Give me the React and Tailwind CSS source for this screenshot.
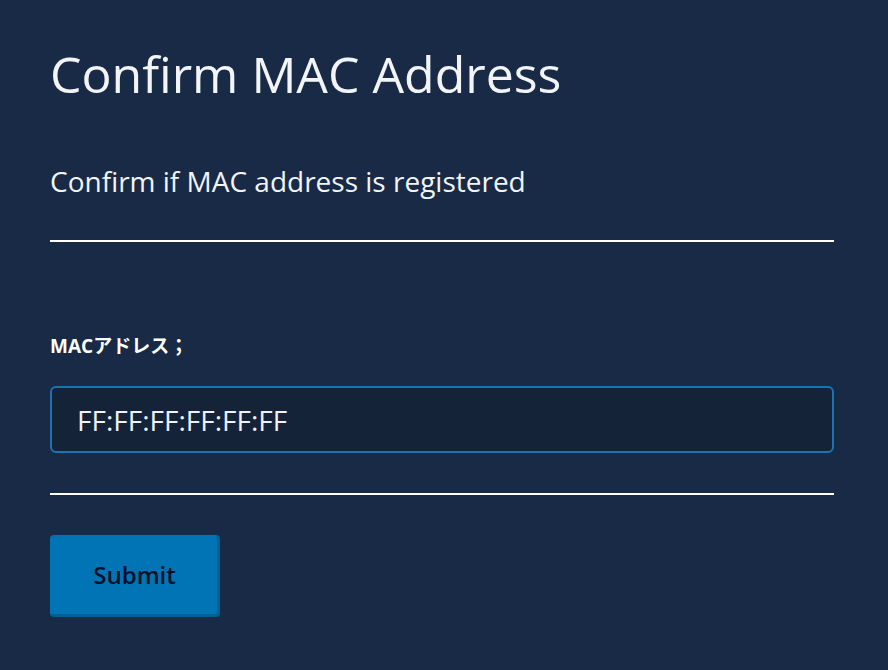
export default function App() {
  return (
    <div className="min-h-screen bg-[#182a45] text-white" style={{ fontFamily: '"Open Sans", "Noto Sans CJK JP", sans-serif' }}>
      <div className="pl-[50px] pr-[54px] pt-[44px]">
        <h1 className="text-[50px] leading-[60px] font-normal text-[#f2f4f7]">Confirm MAC Address</h1>
        <p className="mt-[59px] text-[28px] leading-[36px] text-[#f2f4f7]">Confirm if MAC address is registered</p>
        <hr className="mt-[41px] border-0 h-[2px] bg-white" />
        <form className="pt-[91px]" onSubmit={e => e.preventDefault()}>
          <label className="block text-[19px] leading-[26px] font-bold text-white">MACアドレス；</label>
          <input
            type="text"
            defaultValue="FF:FF:FF:FF:FF:FF"
            className="mt-[27px] block w-full h-[67px] px-[25px] rounded-md border-2 border-[#1a74b0] bg-[#152338] text-[28px] text-[#eef1f5] outline-none"
          />
          <hr className="mt-[40px] border-0 h-[2px] bg-white" />
          <button
            type="submit"
            className="mt-[40px] w-[170px] h-[82px] rounded-sm bg-[#0074b5] border-r-[3px] border-b-[3px] border-[#005f94] pl-[2px] text-[24px] font-semibold text-[#040f28]"
          >
            Submit
          </button>
        </form>
      </div>
    </div>
  );
}
